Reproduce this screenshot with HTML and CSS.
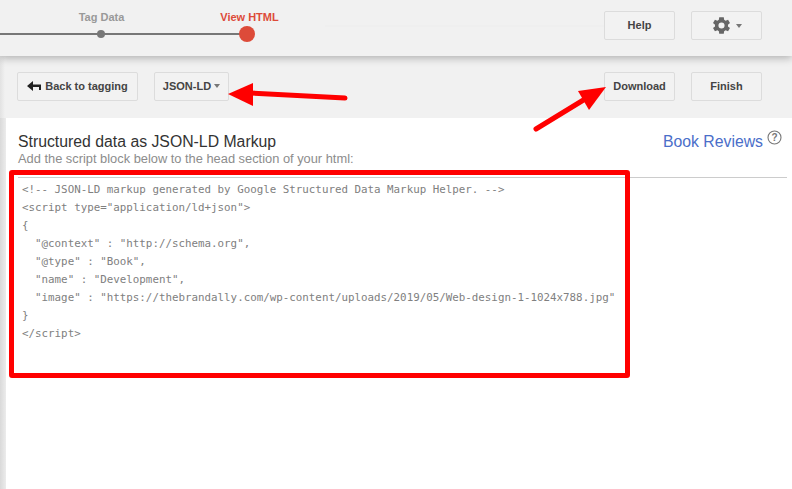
FILE: index.html
```html
<!DOCTYPE html>
<html lang="en">
<head>
<meta charset="utf-8">
<title>Structured Data Markup Helper</title>
<link rel="stylesheet" href="styles.css">
</head>
<body>
<header class="topbar">
  <div class="stepper">
    <div class="step step-tag"><span class="step-label">Tag Data</span><span class="dot"></span></div>
    <div class="step step-view"><span class="step-label">View HTML</span><span class="dot"></span></div>
  </div>
  <div class="faint"></div>
  <div class="actions">
    <button class="btn">Help</button>
    <button class="btn btn-gear">
      <svg class="gear" width="21" height="21" viewBox="0 0 24 24"><path fill="#666" d="M19.400 13a7.500 7.500 0 0 0 0-2l2.300-1.800-2.200-3.800-2.800 1.100a7.500 7.500 0 0 0-1.700-1L14.600 2.500H9.400L9 5.500a7.500 7.500 0 0 0-1.700 1L4.500 5.400 2.300 9.200 4.600 11a7.500 7.500 0 0 0 0 2l-2.300 1.800 2.200 3.800 2.800-1.100a7.500 7.500 0 0 0 1.700 1l.4 3h5.200l.4-3a7.500 7.500 0 0 0 1.700-1l2.800 1.100 2.200-3.800zM12 15.500a3.500 3.500 0 1 1 0-7 3.500 3.500 0 0 1 0 7z"/></svg>
      <span class="caret"></span>
    </button>
  </div>
</header>
<div class="page">
  <div class="toolbar">
    <button class="btn btn-back">
      <svg width="14" height="10" viewBox="0 0 14 10"><path fill="#222" d="M6 0v3.500h8V9h-2V6H6v4L0 5z"/></svg>
      Back to tagging
    </button>
    <button class="btn btn-format">JSON-LD <span class="caret"></span></button>
    <div class="spacer"></div>
    <button class="btn">Download</button>
    <button class="btn">Finish</button>
  </div>
  <main class="content">
    <div class="heading">
      <div>
        <h1 class="title">Structured data as JSON-LD Markup</h1>
        <p class="subtitle">Add the script block below to the head section of your html:</p>
      </div>
      <div class="page-type">
        <a class="type-link">Book Reviews</a>
        <svg class="help" width="15" height="15" viewBox="0 0 15 15"><circle cx="7.500" cy="7.500" r="6.500" fill="none" stroke="#777" stroke-width="1.100"/><text x="7.500" y="11" text-anchor="middle" class="help-mark">?</text></svg>
      </div>
    </div>
    <pre class="code">&lt;!-- JSON-LD markup generated by Google Structured Data Markup Helper. --&gt;
&lt;script type="application/ld+json"&gt;
{
  "@context" : "http://schema.org",
  "@type" : "Book",
  "name" : "Development",
  "image" : "https://thebrandally.com/wp-content/uploads/2019/05/Web-design-1-1024x788.jpg"
}
&lt;/script&gt;</pre>
  </main>
</div>
<div class="highlight"></div>
<svg class="arrows" width="792" height="489" viewBox="0 0 792 489">
  <path d="M345 98 L250 93" stroke="#f00" stroke-width="5" stroke-linecap="round" fill="none"/>
  <path d="M228 94 L253 83 L253 106 Z" fill="#f00"/>
  <path d="M536 129 L590 96" stroke="#f00" stroke-width="5" stroke-linecap="round" fill="none"/>
  <path d="M606 87 L578 91 L589 110 Z" fill="#f00"/>
</svg>
</body>
</html>
```
FILE: styles.css
```css
* { box-sizing: border-box; }
html, body { margin: 0; height: 100%; }
body {
  position: relative;
  width: 792px;
  height: 489px;
  overflow: hidden;
  background: #f1f1f1;
  font-family: "Liberation Sans", Arial, sans-serif;
}
.topbar {
  position: relative;
  z-index: 2;
  height: 56px;
  background: #f1f1f1;
  box-shadow: 0 2px 8px rgba(0, 0, 0, .28);
  display: flex;
  padding-top: 11px;
}
.stepper {
  position: relative;
  width: 254px;
  height: 45px;
  flex: none;
}
.stepper::before {
  content: "";
  position: absolute;
  left: 0;
  width: 247px;
  top: 22px;
  height: 2px;
  background: #777;
}
.step {
  position: absolute;
  top: 0;
  display: flex;
  flex-direction: column;
  align-items: center;
  width: 80px;
}
.step-tag { left: 61px; }
.step-view { left: 207px; }
.step-label {
  font-size: 11px;
  line-height: 13px;
  font-weight: 700;
  color: #999;
}
.step-tag .step-label { padding-left: 1px; }
.step-view .step-label { padding-left: 5px; color: #dd4b39; }
.dot {
  position: absolute;
  top: 19px;
  width: 8px;
  height: 8px;
  border-radius: 50%;
  background: #777;
}
.step-view .dot {
  top: 15px;
  width: 16px;
  height: 16px;
  background: #dd4b39;
}
.faint {
  flex: 1;
  height: 2px;
  margin: 14px 0 0 71px;
  background: #efefef;
}
.actions {
  display: flex;
  gap: 16px;
  margin-left: -22px;
  padding-right: 30px;
}
.btn {
  width: 71px;
  height: 29px;
  padding: 0 0 2px;
  background: #f2f2f2;
  border: 1px solid #dcdcdc;
  border-radius: 2px;
  font: 700 11px "Liberation Sans", Arial, sans-serif;
  color: #444;
  display: inline-flex;
  align-items: center;
  justify-content: center;
}
.btn-gear { gap: 4px; padding: 0; }
.caret {
  display: inline-block;
  width: 0;
  height: 0;
  border-left: 3.500px solid transparent;
  border-right: 3.500px solid transparent;
  border-top: 4px solid #777;
}
.page {
  height: 433px;
  padding-left: 6px;
  background: linear-gradient(90deg, #d9d9d9 0, #ececec 6px);
  display: flex;
  flex-direction: column;
}
.toolbar {
  height: 62px;
  margin-left: -6px;
  padding: 16px 30px 0 17px;
  background: linear-gradient(90deg, #e2e2e2 0, #f1f1f1 5px);
  display: flex;
  gap: 16px;
  flex: none;
}
.toolbar .btn { flex: none; }
.spacer { flex: 1; }
.btn-back { width: 121px; gap: 4px; }
.btn-format { width: 75px; gap: 3px; }
.content {
  flex: 1;
  background: #fff;
  padding: 0 5px 0 12px;
}
.heading {
  display: flex;
  justify-content: space-between;
  height: 60px;
  padding-top: 14px;
  border-bottom: 1px solid #ccc;
}
.title {
  margin: 0;
  font-size: 15.800px;
  line-height: 19px;
  font-weight: 400;
  color: #333;
}
.subtitle {
  margin: 1px 0 0;
  font-size: 12.850px;
  line-height: 14px;
  color: #8c8c8c;
}
.page-type {
  display: flex;
  align-items: flex-start;
  gap: 4px;
  padding-right: 5px;
}
.type-link {
  font-size: 15.800px;
  line-height: 19px;
  color: #4a6ec9;
}
.help { margin-top: -2px; }
.help-mark {
  font: 700 10px "Liberation Sans", Arial, sans-serif;
  fill: #777;
}
.code {
  margin: 0;
  padding: 3px 0 0 4px;
  font: 400 10.830px/18px "DejaVu Sans Mono", monospace;
  color: #808080;
}
.highlight {
  position: absolute;
  left: 9px;
  top: 170px;
  width: 621px;
  height: 208px;
  border: 5px solid #f00;
  border-radius: 3px;
  pointer-events: none;
}
.arrows {
  position: absolute;
  left: 0;
  top: 0;
  z-index: 3;
  pointer-events: none;
}
```
